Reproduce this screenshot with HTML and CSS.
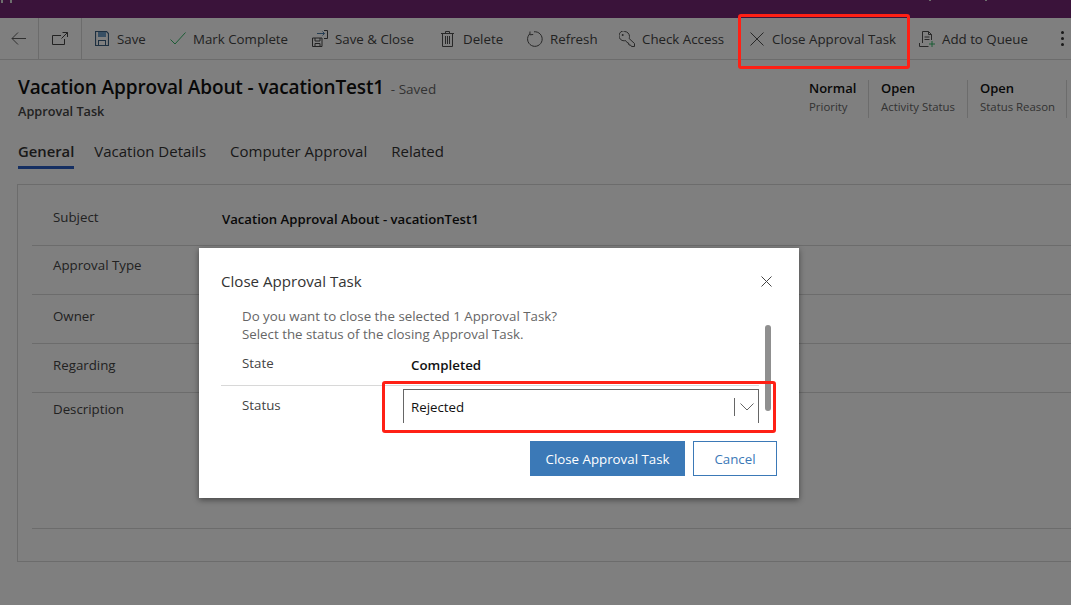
FILE: index.html

```html
<!DOCTYPE html>
<html lang="en">
<head>
    <meta charset="UTF-8">
    <meta name="viewport" content="width=device-width, initial-scale=1.0">
    <title>Close Approval Task</title>
    <link rel="stylesheet" href="styles.css">
</head>
<body>
    <div class="topbar">
        <i class="tick tick-a"></i>
        <i class="tick tick-b"></i>
        <i class="tick tick-c"></i>
        <i class="tick tick-d"></i>
    </div>

    <div class="toolbar">
        <div class="nav-cell nav-back">
            <svg width="15" height="13" viewBox="0 0 15 13"><path d="M15 6.500H1M7 .5l-6 6 6 6" fill="none" stroke="#606060"/></svg>
        </div>
        <div class="nav-cell nav-pop">
            <svg width="16" height="13" viewBox="0 0 16 13"><path d="M9 3.500H.5v9h12V7M10.500 .5H15.500V5M15.500 .5 9.500 6.500" fill="none" stroke="#444"/></svg>
        </div>
        <div class="tools">
            <div class="tool tool-save">
                <svg width="14" height="15" viewBox="0 0 14 15"><path d="M.5.500h11l2 2v12H.5z" fill="none" stroke="#3a5f80" stroke-width="1.200"/><rect x="3" y="1" width="8" height="5" fill="#6f9fc8"/><rect x="3.500" y="9.500" width="7" height="5" fill="none" stroke="#3a5f80"/></svg>
                <span>Save</span>
            </div>
            <div class="tool tool-mark">
                <svg width="16" height="13" viewBox="0 0 16 13"><path d="M.5 7.500 5 12 15.500.500" fill="none" stroke="#35b868"/></svg>
                <span>Mark Complete</span>
            </div>
            <div class="tool tool-close">
                <svg width="16" height="17" viewBox="0 0 16 17"><path d="M.5 8h9.500v8.500H.5zM3 8v3h5V8M3 16.500v-3h5v3" fill="none" stroke="#444"/><path d="M5 3.500h7.500M10.500 1.500l2 2-2 2" fill="none" stroke="#4a7ba6"/><path d="M12 .500h3.500v8H12" fill="none" stroke="#444"/></svg>
                <span>Save &amp; Close</span>
            </div>
            <div class="tool tool-delete">
                <svg width="13" height="16" viewBox="0 0 13 16"><path d="M0 2.500h13M4.500 2.500V.500h4v2M1.500 2.500v13h10v-13M4.500 5v8M6.500 5v8M8.500 5v8" fill="none" stroke="#505050"/></svg>
                <span>Delete</span>
            </div>
            <div class="tool tool-refresh">
                <svg width="16" height="16" viewBox="0 0 16 16"><path d="M7 .8A7.300 7.300 0 1 1 2.800 2.800M3 .5l-.2 3.300 3.400-.3" fill="none" stroke="#505050"/></svg>
                <span>Refresh</span>
            </div>
            <div class="tool tool-access">
                <svg width="16" height="16" viewBox="0 0 16 16"><path d="M5.500.5a5 5 0 0 1 5 5q0 1-.4 2L15.500 12.500v3h-3l-1-1.500h-1.500l-.5-2-1.500-.5-1.500-2q-.8.300-1.500.300a5 5 0 0 1 0-10z" fill="none" stroke="#505050"/><circle cx="3.700" cy="4" r="1" fill="#505050"/></svg>
                <span>Check Access</span>
            </div>
            <div class="tool tool-task">
                <svg width="14" height="14" viewBox="0 0 14 14"><path d="m.5.500 13 13m0-13-13 13" fill="none" stroke="#505050"/></svg>
                <span>Close Approval Task</span>
            </div>
            <div class="tool tool-queue">
                <svg width="16" height="16" viewBox="0 0 16 16"><path d="M3.500 12V.500h6l3 3V9M9.500.500v3h3M5.500 6h5M5.500 8.500h5M.5 12v3.500h9" fill="none" stroke="#505050"/><path d="M13 10v6M10 13h6" stroke="#35b868"/></svg>
                <span>Add to Queue</span>
            </div>
            <div class="more"><i></i><i></i><i></i></div>
        </div>
    </div>

    <div class="record-head">
        <div class="record-title">
            <h1>Vacation Approval About - vacationTest1 <small>- Saved</small></h1>
            <p>Approval Task</p>
        </div>
        <div class="record-stats">
            <div class="stat stat-priority"><strong>Normal</strong><span>Priority</span></div>
            <div class="stat"><strong>Open</strong><span>Activity Status</span></div>
            <div class="stat"><strong>Open</strong><span>Status Reason</span></div>
        </div>
    </div>

    <div class="tabs">
        <a class="tab active">General</a>
        <a class="tab">Vacation Details</a>
        <a class="tab">Computer Approval</a>
        <a class="tab">Related</a>
    </div>

    <div class="form-card">
        <div class="form-row row-subject"><label>Subject</label><b>Vacation Approval About - vacationTest1</b></div>
        <div class="form-row row-type"><label>Approval Type</label></div>
        <div class="form-row row-owner"><label>Owner</label></div>
        <div class="form-row row-regarding"><label>Regarding</label></div>
        <div class="form-row row-desc"><label>Description</label></div>
    </div>

    <div class="overlay"></div>

    <div class="dialog">
        <div class="dialog-head">
            <h2>Close Approval Task</h2>
            <svg width="11" height="11" viewBox="0 0 11 11"><path d="m.5.500 10 10m0-10-10 10" fill="none" stroke="#444"/></svg>
        </div>
        <div class="dialog-body">
            <div class="scrollbar"></div>
            <p class="dialog-text">Do you want to close the selected 1 Approval Task?<br>Select the status of the closing Approval Task.</p>
            <div class="dialog-row row-state"><label>State</label><b>Completed</b></div>
            <div class="dialog-row row-status">
                <label>Status</label>
                <div class="select">
                    <span>Rejected</span>
                    <div class="select-arrow">
                        <svg width="14" height="8" viewBox="0 0 14 8"><path d="m.5.500 6.500 6.500 6.500-6.500" fill="none" stroke="#666"/></svg>
                    </div>
                </div>
            </div>
        </div>
        <div class="dialog-foot">
            <button class="btn-primary">Close Approval Task</button>
            <button class="btn-cancel">Cancel</button>
        </div>
    </div>

    <div class="mark mark-tool"></div>
    <div class="mark mark-select"></div>
</body>
</html>
```

FILE: styles.css

```css
* {
    box-sizing: border-box;
}

html, body {
    height: 100%;
}

body {
    margin: 0;
    background-color: #fff;
    color: #000;
    font-family: "Open Sans", "Noto Sans", Arial, sans-serif;
    font-size: 13.3px;
    overflow: hidden;
}

.topbar {
    display: flex;
    align-items: flex-start;
    height: 18px;
    background-color: #742774;
}

.tick {
    width: 2px;
    height: 3px;
    background-color: #ddd;
}

.tick-a { margin-left: 1px; }
.tick-b { margin-left: 7px; }
.tick-c { margin-left: 917px; height: 1px; }
.tick-d { margin-left: 54px; height: 1px; }

.toolbar {
    height: 42px;
    display: flex;
    align-items: stretch;
    border-bottom: 1px solid #d8d8d8;
    background-color: #fff;
}

.nav-cell {
    display: flex;
    align-items: center;
    flex-shrink: 0;
    border-right: 1px solid #d8d8d8;
}

.nav-back {
    width: 39px;
    padding-left: 11px;
}

.nav-pop {
    width: 43px;
    padding-left: 13px;
}

.tools {
    display: flex;
    align-items: center;
    flex: 1;
    padding-left: 13px;
}

.tool {
    display: flex;
    align-items: center;
    flex-shrink: 0;
    gap: 7px;
    color: #444;
    white-space: nowrap;
}

.tool-save { width: 75px; gap: 8px; }
.tool-mark { width: 142px; }
.tool-close { width: 129px; }
.tool-delete { width: 86px; gap: 9px; }
.tool-refresh { width: 92px; }
.tool-access { width: 131px; }
.tool-task { width: 169px; gap: 8px; }
.tool-queue { width: 142px; }

.more {
    display: flex;
    flex-direction: column;
    gap: 3px;
}

.more i {
    width: 3px;
    height: 3px;
    border-radius: 50%;
    background-color: #333;
}

.record-head {
    display: flex;
    justify-content: space-between;
    height: 81px;
    padding: 14px 4px 0 18px;
}

.record-title h1 {
    margin: 0;
    font-size: 19px;
    line-height: 27px;
    font-weight: 600;
    letter-spacing: -0.13px;
    color: #111;
}

.record-title small {
    font-size: 13.5px;
    font-weight: 400;
    letter-spacing: 0;
    color: #666;
    margin-left: 2px;
}

.record-title p {
    margin: 0;
    font-size: 12.7px;
    line-height: 17px;
    font-weight: 600;
    color: #444;
}

.record-stats {
    display: flex;
    height: 38px;
    margin-top: 6px;
}

.stat {
    display: flex;
    flex-direction: column;
    width: 99px;
    padding-left: 12px;
    border-right: 1px solid #d8d8d8;
}

.stat-priority {
    width: 60px;
    padding-left: 0;
}

.stat strong {
    font-size: 13px;
    line-height: 16px;
    font-weight: 600;
    color: #111;
}

.stat span {
    font-size: 11.4px;
    line-height: 22px;
    color: #666;
    white-space: nowrap;
}

.tabs {
    display: flex;
    gap: 24px;
    height: 43px;
    margin-left: 18px;
}

.tab {
    height: 28px;
    font-size: 15px;
    line-height: 20px;
    color: #333;
}

.tab.active {
    margin-right: -4px;
    font-size: 14.8px;
    font-weight: 600;
    border-bottom: 3px solid #2b5fc4;
}

.form-card {
    height: 378px;
    margin-left: 17px;
    padding-left: 14px;
    border: 1px solid #d8d8d8;
    border-right: 0;
}

.form-row {
    display: flex;
    border-bottom: 1px solid #d8d8d8;
    padding-left: 21px;
}

.form-row label {
    width: 169px;
    color: #444;
}

.form-row b {
    padding-top: 2px;
    font-size: 13.15px;
    font-weight: 600;
    color: #111;
}

.row-subject { height: 61px; padding-top: 23px; }
.row-type { height: 49px; padding-top: 10px; }
.row-owner { height: 49px; padding-top: 12px; }
.row-regarding { height: 49px; padding-top: 12px; }
.row-desc { height: 136px; padding-top: 7px; }

.overlay {
    position: absolute;
    top: 0;
    left: 0;
    width: 100%;
    height: 100%;
    background-color: rgba(0, 0, 0, 0.5);
}

.dialog {
    position: absolute;
    top: 248px;
    left: 199px;
    width: 600px;
    height: 250px;
    padding: 0 22px;
    background-color: #fff;
    box-shadow: 0 2px 6px rgba(0, 0, 0, 0.45);
}

.dialog-head {
    display: flex;
    justify-content: space-between;
    align-items: center;
    height: 57px;
    padding-right: 5px;
    padding-top: 10px;
}

.dialog-head h2 {
    margin: 0 0 2px;
    font-size: 15.1px;
    font-weight: 400;
    color: #333;
}

.dialog-body {
    position: relative;
    height: 136px;
    width: 538px;
    padding-top: 2px;
}

.scrollbar {
    position: absolute;
    top: 20px;
    right: -12px;
    width: 6px;
    height: 86px;
    border-radius: 3px;
    background-color: #8f8f8f;
}

.dialog-text {
    margin: 0 0 0 21px;
    line-height: 18px;
    color: #666;
}

.dialog-row {
    display: flex;
    padding-left: 21px;
}

.dialog-row label {
    width: 169px;
    color: #444;
}

.dialog-row b {
    padding-top: 2px;
    font-weight: 600;
    color: #111;
}

.row-state {
    height: 32px;
    margin-top: 11px;
    border-bottom: 1px solid #d8d8d8;
}

.row-status {
    padding-top: 3px;
}

.row-status label {
    padding-top: 7px;
    width: 161px;
}

.select {
    display: flex;
    align-items: center;
    justify-content: space-between;
    flex: 1;
    height: 34px;
    padding-left: 7px;
    border: 1px solid #666;
    border-bottom: 0;
    color: #111;
}

.select-arrow {
    display: flex;
    align-items: center;
    justify-content: center;
    width: 24px;
    height: 18px;
    border-left: 1px solid #666;
}

.dialog-foot {
    display: flex;
    justify-content: flex-end;
    gap: 8px;
}

.dialog-foot button {
    height: 35px;
    font-family: inherit;
    font-size: 13.3px;
    border-radius: 0;
}

.btn-primary {
    width: 155px;
    border: 0;
    background-color: #3b79b7;
    color: #fff;
}

.btn-cancel {
    width: 84px;
    border: 1px solid #3b79b7;
    background-color: #fff;
    color: #3b79b7;
}

.mark {
    position: absolute;
    border: 3px solid #ff2015;
    border-radius: 3px;
}

.mark-tool {
    top: 14px;
    left: 738px;
    width: 172px;
    height: 55px;
}

.mark-select {
    top: 381px;
    left: 382px;
    width: 394px;
    height: 52px;
}
```
